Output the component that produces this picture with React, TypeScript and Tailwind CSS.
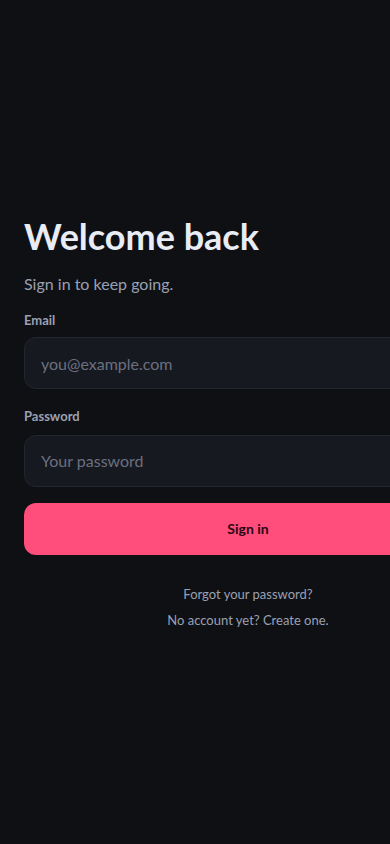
import React from 'react';

const App: React.FC = () => {
  return (
    <div className="min-h-screen w-full overflow-hidden bg-[#0f1014] flex items-center font-['Lato',sans-serif]">
      <div className="w-[448px] shrink-0 ml-6">
        <h1 className="text-[36px] leading-[44px] font-bold text-[#e8ecf5]">Welcome back</h1>
        <p className="mt-[14px] text-base text-[#9aa0b3]">Sign in to keep going.</p>

        <form className="mt-[15px]" onSubmit={(e) => e.preventDefault()}>
          <label className="block text-[13px] font-bold text-[#9aa0b3]">Email</label>
          <input
            type="email"
            placeholder="you@example.com"
            className="mt-[7px] block w-full h-[52px] rounded-xl border border-[#23262e] bg-[#171920] px-4 text-base text-[#e8ecf5] placeholder:text-[#6b7080] outline-none"
          />

          <label className="mt-[18px] block text-[13px] font-bold text-[#9aa0b3]">Password</label>
          <input
            type="password"
            placeholder="Your password"
            className="mt-2 block w-full h-[52px] rounded-xl border border-[#23262e] bg-[#171920] px-4 text-base text-[#e8ecf5] placeholder:text-[#6b7080] outline-none"
          />

          <button
            type="submit"
            className="mt-4 w-full h-[52px] rounded-xl bg-[#ff4d7c] text-sm font-bold text-[#2a0612]"
          >
            Sign in
          </button>
        </form>

        <div className="mt-[30px] flex flex-col items-center gap-[7px] text-[13px] text-[#9aa0b3]">
          <a href="#">Forgot your password?</a>
          <a href="#">No account yet? Create one.</a>
        </div>
      </div>
    </div>
  );
};

export default App;
